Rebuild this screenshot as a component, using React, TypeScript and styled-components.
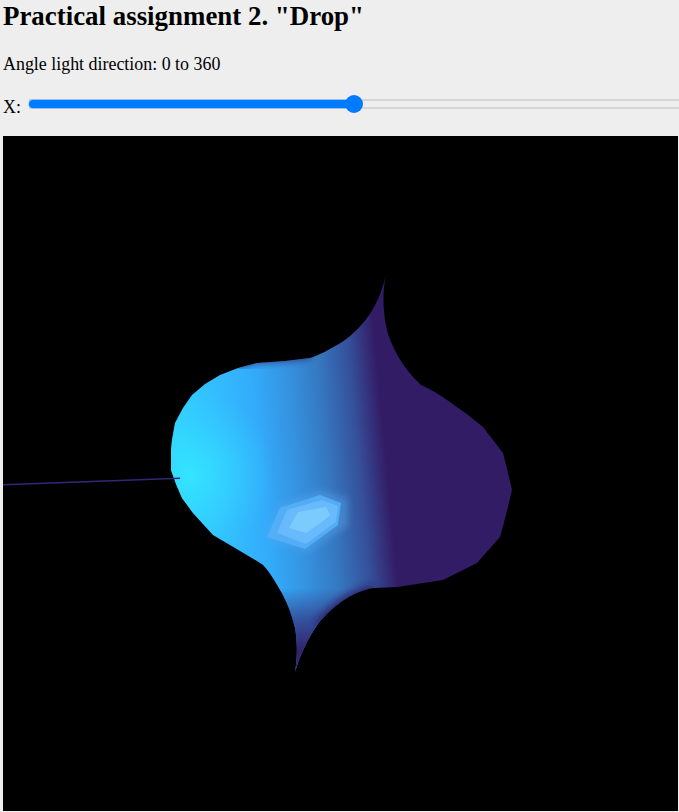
import React from "react";
import styled, { createGlobalStyle } from "styled-components";

const Global = createGlobalStyle`
  html, body { margin: 0; padding: 0; background: #eeeeee; overflow: hidden; }
  body { height: 812px; font-family: "Liberation Serif", "Times New Roman", serif; color: #000; }
`;

const Page = styled.main`
  display: flex;
  flex-direction: column;
  padding: 0 0 0 3px;
  width: 679px;
  height: 812px;
  box-sizing: border-box;
  overflow: hidden;
`;

const Title = styled.h1`
  margin: 0;
  font-size: 26.9px;
  line-height: 32px;
  font-weight: bold;
`;

const Hint = styled.p`
  margin: 22px 0 0;
  font-size: 17.92px;
  line-height: 20px;
`;

const SliderRow = styled.div`
  display: flex;
  align-items: flex-start;
  margin-top: 25px;
  height: 37px;
`;

const SliderLabel = styled.label`
  font-size: 17.92px;
  line-height: 20px;
  margin-top: -2px;
  width: 26px;
  flex: none;
`;

const Track = styled.div`
  position: relative;
  flex: none;
  width: 660px;
  height: 10px;
  box-sizing: border-box;
  border-top: 2px solid #d6d6d6;
  border-bottom: 2px solid #d6d6d6;
`;

const Fill = styled.div`
  position: absolute;
  left: 0;
  top: -1px;
  bottom: -1px;
  border-radius: 4px;
  background: #007bff;
  box-shadow: 0 0 0 1px rgba(0, 123, 255, 0.25);
`;

const Thumb = styled.div`
  position: absolute;
  top: 50%;
  width: 18px;
  height: 18px;
  margin: -9px 0 0 -9px;
  border-radius: 50%;
  background: #007bff;
`;

const Scene = styled.div`
  width: 675px;
  height: 675px;
  flex: none;
  background: #000;
`;

const SceneSvg = styled.svg`
  display: block;
  width: 675px;
  height: 675px;
`;

const outline =
  "M385.7 275 C383 290 382 310 387 330 C391 345 402 368 421 385 C432 390 440 395 447 400 L468 415 L483 427 L503 453 L509 477 L512 490 L506 515 L500 537 L477 563 L443 580 L397 587 L373 588 C362 590 354 594 347 598 C335 605 325 615 318 624 C308 638 300 655 295 672 C298 655 297 640 295 628 C291 612 286 600 280 590 C275 581 269 571 263 565 L257 561 L235 548 L213 535 L193 513 L182 498 L176 484 L171 470 L171 450 L172 440 L175 423 L183 408 L192 395 L205 384 L220 375 L238 368 L257 363 L285 361 L310 358 C320 355 330 349 337 345 C350 338 360 327 367 318 C376 306 382 292 385.7 275 Z";

function Drop() {
  return (
    <SceneSvg viewBox="3 136 675 675" aria-label="Rendered drop surface">
      <defs>
        <linearGradient id="body" gradientUnits="userSpaceOnUse" x1="170" y1="470" x2="394" y2="449">
          <stop offset="0" stopColor="#33d4ff" />
          <stop offset="0.2" stopColor="#33c0ff" />
          <stop offset="0.4" stopColor="#33acfb" />
          <stop offset="0.56" stopColor="#3592e0" />
          <stop offset="0.7" stopColor="#3578c0" />
          <stop offset="0.84" stopColor="#35509a" />
          <stop offset="0.96" stopColor="#331c66" />
          <stop offset="1" stopColor="#331c66" />
        </linearGradient>
        <radialGradient id="glow" gradientUnits="userSpaceOnUse" cx="190" cy="475" r="85">
          <stop offset="0" stopColor="#33e6ff" stopOpacity="0.95" />
          <stop offset="0.5" stopColor="#33dcff" stopOpacity="0.5" />
          <stop offset="1" stopColor="#33d0ff" stopOpacity="0" />
        </radialGradient>
        <linearGradient id="tip" gradientUnits="userSpaceOnUse" x1="0" y1="588" x2="0" y2="650">
          <stop offset="0" stopColor="#331c66" stopOpacity="0" />
          <stop offset="0.5" stopColor="#331c66" stopOpacity="0.55" />
          <stop offset="1" stopColor="#331c66" stopOpacity="0.95" />
        </linearGradient>
        <clipPath id="clip">
          <path d={outline} />
        </clipPath>
        <filter id="soft" x="-30%" y="-30%" width="160%" height="160%">
          <feGaussianBlur stdDeviation="3" />
        </filter>
        <filter id="edge" x="-30%" y="-30%" width="160%" height="160%">
          <feGaussianBlur stdDeviation="0.6" />
        </filter>
      </defs>
      <path d={outline} fill="url(#body)" />
      <g clipPath="url(#clip)">
        <rect x="170" y="390" width="170" height="170" fill="url(#glow)" />
        <path d="M238 366 L257 361 L285 359 L310 356" fill="none" stroke="#331c66" strokeWidth="5" filter="url(#soft)" opacity="0.8" />
        <rect x="270" y="588" width="110" height="90" fill="url(#tip)" />
        <path d="M318 624 C325 615 335 605 347 598 C354 594 362 590 373 588" fill="none" stroke="#331c66" strokeWidth="7" filter="url(#soft)" opacity="0.8" />
      </g>
      <path d="M3 484 L180 477.5 L180 479 L3 485.5 Z" fill="#2e2a78" />
      <polygon points="263,539 278,505 320,490 348,498 348,526 307,553" fill="#5aa8f0" opacity="0.4" filter="url(#soft)" />
      <polygon points="267,537 280,508 320,495 341,503 338,525 305,549" fill="#55b0f8" opacity="0.9" filter="url(#edge)" />
      <polygon points="277,533 287,510 322,500 338,506 336,522 306,544" fill="#6cbcfd" opacity="0.9" filter="url(#edge)" />
      <polygon points="289,528 298,512 326,507 330,515 322,522 306,533" fill="#7ccbff" filter="url(#edge)" />
    </SceneSvg>
  );
}

export default function App() {
  return (
    <Page>
      <Global />
      <Title>Practical assignment 2. "Drop"</Title>
      <Hint>Angle light direction: 0 to 360</Hint>
      <SliderRow>
        <SliderLabel htmlFor="x">X:</SliderLabel>
        <Track id="x" role="slider" aria-valuenow={180} aria-valuemin={0} aria-valuemax={360}>
          <Fill style={{ width: 325 }} />
          <Thumb style={{ left: 325 }} />
        </Track>
      </SliderRow>
      <Scene>
        <Drop />
      </Scene>
    </Page>
  );
}
